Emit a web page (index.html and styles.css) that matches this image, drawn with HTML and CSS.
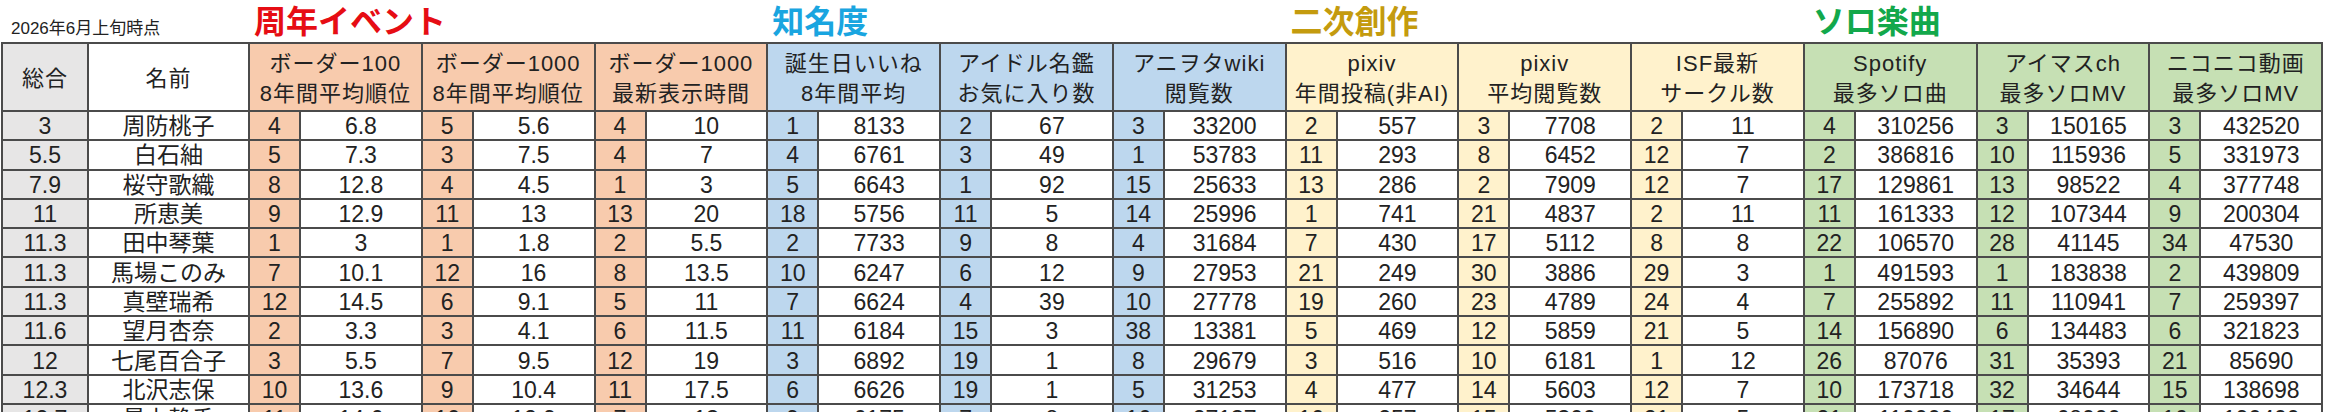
FILE: index.html
```html
<!DOCTYPE html>
<html lang="ja">
<head>
<meta charset="utf-8">
<title>ランキング</title>
<link rel="stylesheet" href="styles.css">
</head>
<body>
<div class="sheet">
  <div class="titles">
    <div class="date">2026年6月上旬時点</div>
    <div class="ttl ttl-red">周年イベント</div>
    <div class="ttl ttl-blue">知名度</div>
    <div class="ttl ttl-gold">二次創作</div>
    <div class="ttl ttl-green">ソロ楽曲</div>
  </div>
  <table class="grid">
    <colgroup>
      <col class="w-tot"><col class="w-name">
      <col class="w-r"><col class="w-v"><col class="w-r"><col class="w-v"><col class="w-r"><col class="w-v">
      <col class="w-r"><col class="w-v"><col class="w-r"><col class="w-v"><col class="w-r"><col class="w-v">
      <col class="w-r"><col class="w-v"><col class="w-r"><col class="w-v"><col class="w-r"><col class="w-v">
      <col class="w-r"><col class="w-v"><col class="w-r"><col class="w-v"><col class="w-r"><col class="w-v">
    </colgroup>
    <thead>
      <tr>
        <th class="h-tot">総合</th>
        <th class="h-name">名前</th>
        <th colspan="2" class="or">ボーダー100<br>8年間平均順位</th>
        <th colspan="2" class="or">ボーダー1000<br>8年間平均順位</th>
        <th colspan="2" class="or">ボーダー1000<br>最新表示時間</th>
        <th colspan="2" class="bl">誕生日いいね<br>8年間平均</th>
        <th colspan="2" class="bl">アイドル名鑑<br>お気に入り数</th>
        <th colspan="2" class="bl">アニヲタwiki<br>閲覧数</th>
        <th colspan="2" class="ye">pixiv<br>年間投稿(非AI)</th>
        <th colspan="2" class="ye">pixiv<br>平均閲覧数</th>
        <th colspan="2" class="ye">ISF最新<br>サークル数</th>
        <th colspan="2" class="gr">Spotify<br>最多ソロ曲</th>
        <th colspan="2" class="gr">アイマスch<br>最多ソロMV</th>
        <th colspan="2" class="gr">ニコニコ動画<br>最多ソロMV</th>
      </tr>
    </thead>
    <tbody>
      <tr><td class="tot">3</td><td>周防桃子</td><td class="or">4</td><td>6.8</td><td class="or">5</td><td>5.6</td><td class="or">4</td><td>10</td><td class="bl">1</td><td>8133</td><td class="bl">2</td><td>67</td><td class="bl">3</td><td>33200</td><td class="ye">2</td><td>557</td><td class="ye">3</td><td>7708</td><td class="ye">2</td><td>11</td><td class="gr">4</td><td>310256</td><td class="gr">3</td><td>150165</td><td class="gr">3</td><td>432520</td></tr>
      <tr><td class="tot">5.5</td><td>白石紬</td><td class="or">5</td><td>7.3</td><td class="or">3</td><td>7.5</td><td class="or">4</td><td>7</td><td class="bl">4</td><td>6761</td><td class="bl">3</td><td>49</td><td class="bl">1</td><td>53783</td><td class="ye">11</td><td>293</td><td class="ye">8</td><td>6452</td><td class="ye">12</td><td>7</td><td class="gr">2</td><td>386816</td><td class="gr">10</td><td>115936</td><td class="gr">5</td><td>331973</td></tr>
      <tr><td class="tot">7.9</td><td>桜守歌織</td><td class="or">8</td><td>12.8</td><td class="or">4</td><td>4.5</td><td class="or">1</td><td>3</td><td class="bl">5</td><td>6643</td><td class="bl">1</td><td>92</td><td class="bl">15</td><td>25633</td><td class="ye">13</td><td>286</td><td class="ye">2</td><td>7909</td><td class="ye">12</td><td>7</td><td class="gr">17</td><td>129861</td><td class="gr">13</td><td>98522</td><td class="gr">4</td><td>377748</td></tr>
      <tr><td class="tot">11</td><td>所恵美</td><td class="or">9</td><td>12.9</td><td class="or">11</td><td>13</td><td class="or">13</td><td>20</td><td class="bl">18</td><td>5756</td><td class="bl">11</td><td>5</td><td class="bl">14</td><td>25996</td><td class="ye">1</td><td>741</td><td class="ye">21</td><td>4837</td><td class="ye">2</td><td>11</td><td class="gr">11</td><td>161333</td><td class="gr">12</td><td>107344</td><td class="gr">9</td><td>200304</td></tr>
      <tr><td class="tot">11.3</td><td>田中琴葉</td><td class="or">1</td><td>3</td><td class="or">1</td><td>1.8</td><td class="or">2</td><td>5.5</td><td class="bl">2</td><td>7733</td><td class="bl">9</td><td>8</td><td class="bl">4</td><td>31684</td><td class="ye">7</td><td>430</td><td class="ye">17</td><td>5112</td><td class="ye">8</td><td>8</td><td class="gr">22</td><td>106570</td><td class="gr">28</td><td>41145</td><td class="gr">34</td><td>47530</td></tr>
      <tr><td class="tot">11.3</td><td>馬場このみ</td><td class="or">7</td><td>10.1</td><td class="or">12</td><td>16</td><td class="or">8</td><td>13.5</td><td class="bl">10</td><td>6247</td><td class="bl">6</td><td>12</td><td class="bl">9</td><td>27953</td><td class="ye">21</td><td>249</td><td class="ye">30</td><td>3886</td><td class="ye">29</td><td>3</td><td class="gr">1</td><td>491593</td><td class="gr">1</td><td>183838</td><td class="gr">2</td><td>439809</td></tr>
      <tr><td class="tot">11.3</td><td>真壁瑞希</td><td class="or">12</td><td>14.5</td><td class="or">6</td><td>9.1</td><td class="or">5</td><td>11</td><td class="bl">7</td><td>6624</td><td class="bl">4</td><td>39</td><td class="bl">10</td><td>27778</td><td class="ye">19</td><td>260</td><td class="ye">23</td><td>4789</td><td class="ye">24</td><td>4</td><td class="gr">7</td><td>255892</td><td class="gr">11</td><td>110941</td><td class="gr">7</td><td>259397</td></tr>
      <tr><td class="tot">11.6</td><td>望月杏奈</td><td class="or">2</td><td>3.3</td><td class="or">3</td><td>4.1</td><td class="or">6</td><td>11.5</td><td class="bl">11</td><td>6184</td><td class="bl">15</td><td>3</td><td class="bl">38</td><td>13381</td><td class="ye">5</td><td>469</td><td class="ye">12</td><td>5859</td><td class="ye">21</td><td>5</td><td class="gr">14</td><td>156890</td><td class="gr">6</td><td>134483</td><td class="gr">6</td><td>321823</td></tr>
      <tr><td class="tot">12</td><td>七尾百合子</td><td class="or">3</td><td>5.5</td><td class="or">7</td><td>9.5</td><td class="or">12</td><td>19</td><td class="bl">3</td><td>6892</td><td class="bl">19</td><td>1</td><td class="bl">8</td><td>29679</td><td class="ye">3</td><td>516</td><td class="ye">10</td><td>6181</td><td class="ye">1</td><td>12</td><td class="gr">26</td><td>87076</td><td class="gr">31</td><td>35393</td><td class="gr">21</td><td>85690</td></tr>
      <tr><td class="tot">12.3</td><td>北沢志保</td><td class="or">10</td><td>13.6</td><td class="or">9</td><td>10.4</td><td class="or">11</td><td>17.5</td><td class="bl">6</td><td>6626</td><td class="bl">19</td><td>1</td><td class="bl">5</td><td>31253</td><td class="ye">4</td><td>477</td><td class="ye">14</td><td>5603</td><td class="ye">12</td><td>7</td><td class="gr">10</td><td>173718</td><td class="gr">32</td><td>34644</td><td class="gr">15</td><td>138698</td></tr>
      <tr><td class="tot">12.7</td><td>最上静香</td><td class="or">11</td><td>14.6</td><td class="or">10</td><td>12.9</td><td class="or">7</td><td>13</td><td class="bl">9</td><td>6175</td><td class="bl">7</td><td>8</td><td class="bl">16</td><td>27137</td><td class="ye">16</td><td>257</td><td class="ye">15</td><td>5300</td><td class="ye">21</td><td>5</td><td class="gr">21</td><td>110000</td><td class="gr">17</td><td>68000</td><td class="gr">16</td><td>190400</td></tr>
    </tbody>
  </table>
</div>
</body>
</html>
```

FILE: styles.css
```css
html, body {
  margin: 0;
  padding: 0;
  overflow: hidden;
  background: #ffffff;
}

body {
  font-family: "Liberation Sans", "Noto Sans CJK JP", sans-serif;
  color: #222222;
}

.sheet {
  width: 2330px;
}

.titles {
  display: grid;
  grid-template-columns: 248px repeat(4, 518.25px);
  height: 42px;
}

.date {
  font-size: 17px;
  line-height: 20px;
  padding: 19px 0 0 11px;
  color: #222222;
  white-space: nowrap;
}

.ttl {
  font-size: 32px;
  line-height: 39px;
  padding-top: 3px;
  font-weight: 700;
  padding-left: 6px;
  white-space: nowrap;
}

.ttl-red { color: #e60d14; }
.ttl-blue { color: #19a5e0; }
.ttl-gold { color: #c49b0e; }
.ttl-green { color: #12a84b; padding-left: 10px; }

.grid {
  border-collapse: collapse;
  table-layout: fixed;
  width: 2320px;
  margin-left: 1px;
}

.w-tot { width: 86px; }
.w-name { width: 161px; }
.w-r { width: 51px; }
.w-v { width: 121.75px; }

.grid th,
.grid td {
  border: 2px solid #4b4b4b;
  padding: 0;
  text-align: center;
  vertical-align: middle;
  white-space: nowrap;
  box-sizing: border-box;
}

.grid th {
  height: 68px;
  padding-top: 4px;
  font-size: 22px;
  font-weight: 400;
  line-height: 30px;
  letter-spacing: 1px;
}

.grid td {
  height: 29.3px;
  padding-top: 1px;
  font-size: 23px;
  line-height: 26px;
  background: #ffffff;
}

.grid .h-tot,
.grid .tot { background: #e7e6e6; }
.grid .h-name { background: #ffffff; }

.grid .or { background: #f8cbad; }
.grid .bl { background: #bdd7ee; }
.grid .ye { background: #fff2cc; }
.grid .gr { background: #c6e0b4; }
```
